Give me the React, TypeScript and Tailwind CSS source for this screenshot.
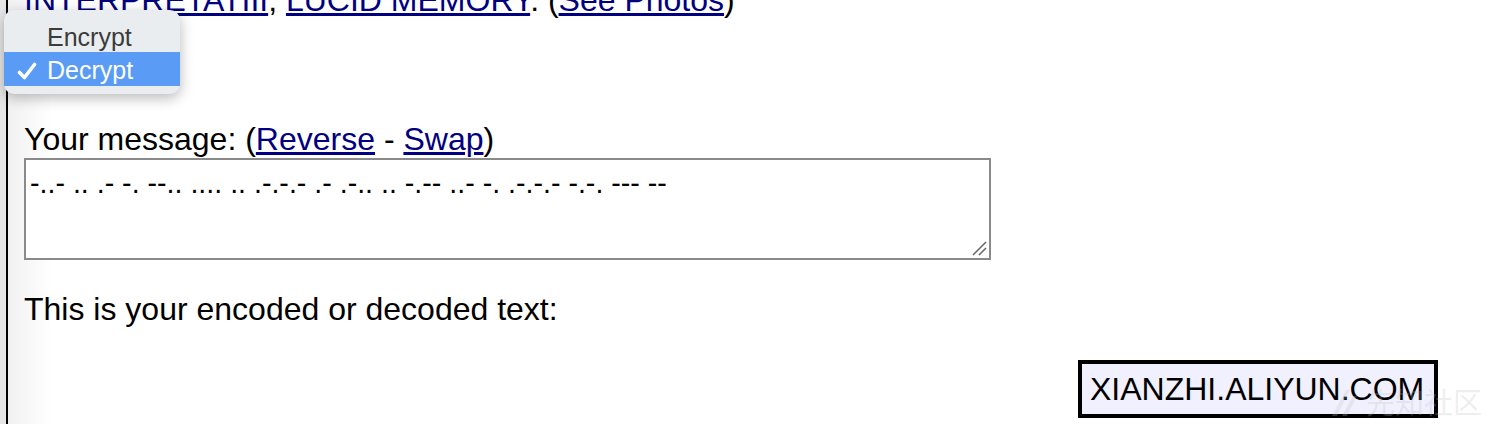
import React from "react";

export default function App() {
  const arial = { fontFamily: '"Liberation Sans", Arial, sans-serif' };
  return (
    <div className="relative flex h-[424px] w-[1498px] overflow-hidden bg-white" style={arial}>
      <div className="w-[6px] shrink-0 bg-[#e6e6e6]" />
      <div className="flex-1 border-l-[2px] border-black bg-[linear-gradient(to_right,#f1f1f1,#ffffff_44px)] pl-[16px]">
        <div className="mt-[-18px] h-[36px] whitespace-nowrap text-[32px] leading-[36px] text-black">
          <a className="text-[#000080] underline">INTERPRETATIII</a>,{" "}
          <a className="text-[#000080] underline">LUCID MEMORY</a>. (
          <a className="text-[#000080] underline">See Photos</a>)
        </div>
        <div className="mt-[103px] h-[36px] whitespace-nowrap text-[32px] leading-[36px] text-black">
          Your message: (<a className="text-[#000080] underline">Reverse</a> -{" "}
          <a className="text-[#000080] underline">Swap</a>)
        </div>
        <div className="relative mt-[1px] h-[102px] w-[967px] border-2 border-[#8a8a8a] bg-white px-[4px] pt-[8px]">
          <div className="whitespace-nowrap text-[28.6px] leading-[30px] text-black">
            -..- .. .- -. --.. .... .. .-.-.- .- .-.. .. -.-- ..- -. .-.-.- -.-. --- --
          </div>
          <svg className="absolute bottom-[2px] right-[2px]" width="16" height="16" viewBox="0 0 16 16">
            <line x1="2" y1="15" x2="15" y2="2" stroke="#6a6a6a" strokeWidth="1.6" />
            <line x1="8" y1="15" x2="15" y2="8" stroke="#6a6a6a" strokeWidth="1.6" />
          </svg>
        </div>
        <div className="mt-[31px] h-[36px] whitespace-nowrap text-[32px] leading-[36px] text-black">
          This is your encoded or decoded text:
        </div>
      </div>

      {/* dropdown popup */}
      <div className="absolute left-[4px] top-[10px] h-[84px] w-[176px] rounded-[10px] bg-[#eaedef] pt-[11px] shadow-[0_4px_14px_rgba(0,0,0,0.28)]">
        <div className="flex h-[31px] items-center pl-[43px] text-[25px] leading-[30px] text-[#3b3b3b]">Encrypt</div>
        <div className="flex h-[34px] items-center bg-[#5a9bf6] pt-[3px] text-[25px] text-white">
          <span className="flex w-[43px] justify-start pl-[13px]">
            <svg width="20" height="18" viewBox="0 0 20 18">
              <path d="M2.5 10.5 L7.5 15.5 L17.5 2.5" fill="none" stroke="#ffffff" strokeWidth="3.6" strokeLinecap="round" strokeLinejoin="round" />
            </svg>
          </span>
          <span>Decrypt</span>
        </div>
      </div>

      <div className="absolute left-[1078px] top-[360px] flex h-[58px] w-[360px] items-center border-[4px] border-black bg-[#f0f0ff] pl-[8px] text-[32px] text-black">
        XIANZHI.ALIYUN.COM
      </div>
      {/* watermark */}
      <div className="absolute left-[1330px] top-[384px] flex items-center gap-[6px] whitespace-nowrap text-[29px] leading-[34px] text-[rgba(190,190,190,0.25)]" style={{ fontFamily: '"Noto Sans CJK SC", sans-serif' }}>
        <svg width="30" height="32" viewBox="0 0 30 32">
          <path d="M2 31 L16 5 L20 5 L7 31 Z M12 31 L23 11 L27 11 L17 31 Z" fill="rgba(190,190,190,0.25)" />
        </svg>
        <span>先知社区</span>
      </div>
    </div>
  );
}
